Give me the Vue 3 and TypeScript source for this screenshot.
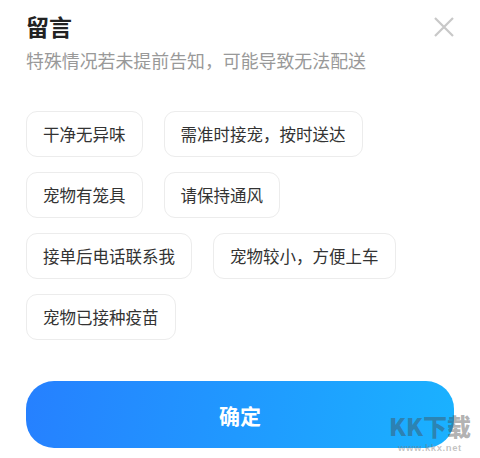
<script setup lang="ts">
const rows: string[][] = [
  ['干净无异味', '需准时接宠，按时送达'],
  ['宠物有笼具', '请保持通风'],
  ['接单后电话联系我', '宠物较小，方便上车'],
  ['宠物已接种疫苗'],
]
</script>

<template>
  <div class="page">
    <header class="head">
      <h1 class="title">留言</h1>
      <svg class="close" width="20" height="20" viewBox="0 0 20 20" aria-label="关闭">
        <path d="M1 1 L19 19 M19 1 L1 19" stroke="#c8c8c8" stroke-width="2.2" fill="none" />
      </svg>
    </header>
    <p class="sub">特殊情况若未提前告知，可能导致无法配送</p>
    <div class="tags">
      <div v-for="(row, i) in rows" :key="i" class="row">
        <span v-for="t in row" :key="t" class="tag">{{ t }}</span>
      </div>
    </div>
    <button class="ok">确定</button>
    <div class="mark">
      <div class="mark-logo">KK下载</div>
      <div class="mark-url">www.kkx.net</div>
    </div>
  </div>
</template>

<style>
html, body { margin: 0; background: #fff; }
</style>

<style scoped>
.page {
  position: relative;
  width: 480px;
  height: 458px;
  overflow: hidden;
  box-sizing: border-box;
  padding: 10px 26px 0;
  background: #fff;
  font-family: "Noto Sans CJK SC", "Noto Sans", sans-serif;
}
.head {
  display: flex;
  justify-content: space-between;
  align-items: center;
  height: 32px;
}
.title {
  margin: 0;
  font-size: 23px;
  line-height: 32px;
  font-weight: 700;
  color: #222;
}
.close { margin-right: 0; margin-top: 2px; }
.sub {
  margin: 3px 0 0;
  font-size: 17.9px;
  line-height: 30px;
  color: #999;
  white-space: nowrap;
}
.tags {
  display: flex;
  flex-direction: column;
  gap: 15px;
  margin-top: 36px;
}
.row { display: flex; gap: 21px; }
.tag {
  box-sizing: border-box;
  height: 46px;
  padding: 0 16px;
  display: flex;
  align-items: center;
  border: 1px solid #ececec;
  border-radius: 11px;
  font-size: 16.5px;
  color: #333;
  white-space: nowrap;
}
.ok {
  display: block;
  width: 428px;
  height: 67px;
  margin-top: 41px;
  border: 0;
  border-radius: 28px;
  background: linear-gradient(100deg, #2680ff 0%, #1ab2ff 100%);
  color: #fff;
  font-family: inherit;
  font-size: 21px;
  font-weight: 700;
}
.mark {
  position: absolute;
  left: 380px;
  top: 410px;
  width: 100px;
  text-align: center;
  pointer-events: none;
}
.mark-logo {
  font-size: 24px;
  line-height: 32px;
  font-weight: 900;
  color: rgba(70, 70, 70, 0.42);
  white-space: nowrap;
}
.mark-url {
  font-family: "Liberation Sans", sans-serif;
  font-size: 9.5px;
  line-height: 11px;
  font-weight: 700;
  letter-spacing: 0.6px;
  color: rgba(120, 120, 120, 0.45);
}
</style>
